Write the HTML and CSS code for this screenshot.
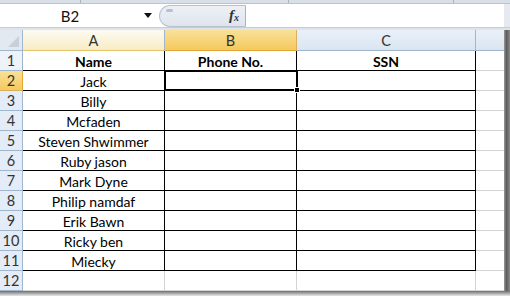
FILE: index.html
```html
<!DOCTYPE html>
<html>
<head>
<meta charset="utf-8">
<link rel="stylesheet" href="styles.css">
</head>
<body>
<div class="app">
  <div class="topstrip">
    <span class="tsep s1"></span><span class="tsep s2"></span><span class="tsep s3"></span>
  </div>
  <div class="fbar">
    <div class="namebox"><span class="ref">B2</span><span class="caret"></span></div>
    <div class="pill"><span class="knob"></span><span class="fx">f<sub>x</sub></span></div>
    <div class="input"></div>
  </div>
  <div class="gapbar"></div>
  <div class="main">
    <div class="sheet">
      <div class="corner"><span class="tri"></span></div>
      <div class="ch cha">A</div>
      <div class="ch chb">B</div>
      <div class="ch">C</div>
      <div class="ch chd"></div>

      <div class="rh rh1">1</div><div class="c da b">Name</div><div class="c db b">Phone No.</div><div class="c dc b">SSN</div><div class="c cd"></div>
      <div class="rh sel">2</div><div class="c da">Jack</div><div class="c db"></div><div class="c dc"></div><div class="c cd"></div>
      <div class="rh">3</div><div class="c da">Billy</div><div class="c db"></div><div class="c dc"></div><div class="c cd"></div>
      <div class="rh">4</div><div class="c da">Mcfaden</div><div class="c db"></div><div class="c dc"></div><div class="c cd"></div>
      <div class="rh">5</div><div class="c da">Steven Shwimmer</div><div class="c db"></div><div class="c dc"></div><div class="c cd"></div>
      <div class="rh">6</div><div class="c da">Ruby jason</div><div class="c db"></div><div class="c dc"></div><div class="c cd"></div>
      <div class="rh">7</div><div class="c da">Mark Dyne</div><div class="c db"></div><div class="c dc"></div><div class="c cd"></div>
      <div class="rh">8</div><div class="c da">Philip namdaf</div><div class="c db"></div><div class="c dc"></div><div class="c cd"></div>
      <div class="rh">9</div><div class="c da">Erik Bawn</div><div class="c db"></div><div class="c dc"></div><div class="c cd"></div>
      <div class="rh">10</div><div class="c da">Ricky ben</div><div class="c db"></div><div class="c dc"></div><div class="c cd"></div>
      <div class="rh">11</div><div class="c da">Miecky</div><div class="c db"></div><div class="c dc"></div><div class="c cd"></div>
      <div class="rh">12</div><div class="c"></div><div class="c"></div><div class="c"></div><div class="c cd"></div>

      <div class="selbox"><span class="handle"></span></div>
    </div>
    <div class="rshadow"></div>
  </div>
  <div class="bshadow"></div>
</div>
</body>
</html>
```
FILE: styles.css
```css
* { box-sizing: border-box; }
html, body { margin: 0; padding: 0; }
body {
  width: 510px; height: 296px; overflow: hidden;
  background: #ffffff;
  font-family: Lato, "Liberation Sans", sans-serif;
  color: #000;
}
.app { width: 510px; height: 296px; display: flex; flex-direction: column; }
.topstrip {
  height: 4px; background: #d9dfe8; border-bottom: 1px solid #b9c4d2; position: relative;
}
.tsep { position: absolute; top: 0; width: 1px; height: 3px; background: #a9b4c2; }
.s1 { left: 80px; } .s2 { left: 288px; } .s3 { left: 453px; }
.fbar { height: 23px; display: flex; background: #fff; }
.namebox {
  width: 156px; display: flex; align-items: center; position: relative;
  font-size: 15px; color: #111;
}
.ref { width: 140px; text-align: center; padding-top: 1px; }
.caret {
  width: 0; height: 0; border-left: 4px solid transparent; border-right: 4px solid transparent;
  border-top: 5px solid #111; margin-left: 4px;
}
.pill {
  width: 87px; margin: 1px 0 0 3px; height: 22px;
  background: linear-gradient(#edf1f6, #dfe5ed);
  border: 1px solid #b8c2cf; border-right: 1px solid #a8b3c1;
  border-radius: 11px 0 0 11px; position: relative;
}
.knob { position: absolute; left: 6px; top: 3px; width: 7px; height: 3px; border-radius: 2px; background: #b7c0cc; }
.fx {
  position: absolute; right: 6px; top: 1px; font-family: "Liberation Serif", serif; font-style: italic;
  font-size: 15px; color: #333; font-weight: bold;
}
.fx sub { font-size: 10px; vertical-align: -1px; }
.input { flex: 1; background: #fff; border-right: 6px solid #e6eaf0; }
.gapbar { height: 3px; background: #dfe4ea; border-top: 1px solid #c3ccd7; }
.main { display: flex; height: 261px; }
.sheet {
  display: grid; position: relative;
  grid-template-columns: 23px 142px 132px 179px 28px;
  grid-template-rows: 21px repeat(12, 20px);
  width: 504px;
}
.rshadow { width: 6px; background: linear-gradient(90deg, #9a9a9a, #5c5c5c 40%, #8a8a8a); }
.bshadow { height: 5px; background: linear-gradient(#6f6f6f, #b8b8b8 60%, #e8e8e8); }
.corner {
  background: #e3e9f1; border-right: 1px solid #9eb6ce; border-bottom: 1px solid #9eb6ce; position: relative;
}
.tri {
  position: absolute; right: 3px; bottom: 3px; width: 0; height: 0;
  border-left: 11px solid transparent; border-bottom: 11px solid #c6cfdb;
}
.ch {
  background: linear-gradient(#e9f0f8, #dbe5f1);
  border-right: 1px solid #9eb6ce; border-bottom: 1px solid #9eb6ce;
  font-size: 14.5px; color: #333; text-align: center; line-height: 21px;
}
.cha { background: linear-gradient(#fdfbf2, #f8ecc4); border-bottom-color: #e3c36b; }
.chb { background: linear-gradient(#f9e199, #f5c95c); border-bottom-color: #e2a93a; border-right-color: #d8b061; }
.chd { border-right: none; }
.rh {
  background: #e4ecf7; border-right: 1px solid #9eb6ce; border-bottom: 1px solid #9eb6ce;
  font-size: 14.5px; color: #333; text-align: center; line-height: 20px;
}
.rh1 { background: #eef3fa; }
.rh.sel { background: linear-gradient(#f9e199, #f5c95c); border-right-color: #e2a93a; border-bottom-color: #d8b061; }
.c {
  border-right: 1px solid #d4d4d4; border-bottom: 1px solid #d4d4d4;
  font-size: 14px; text-align: center; line-height: 21px; white-space: nowrap; overflow: hidden;
}
.cd { border-right: none; }
.da, .db, .dc { border-right: 1px solid #000; border-bottom: 1px solid #000; }
.b { font-weight: bold; }
.selbox {
  position: absolute; left: 164px; top: 40px; width: 134px; height: 21px;
  border: 2px solid #000; pointer-events: none;
}
.handle {
  position: absolute; right: -4px; bottom: -4px; width: 6px; height: 6px;
  background: #000; border: 1px solid #fff;
}
```
